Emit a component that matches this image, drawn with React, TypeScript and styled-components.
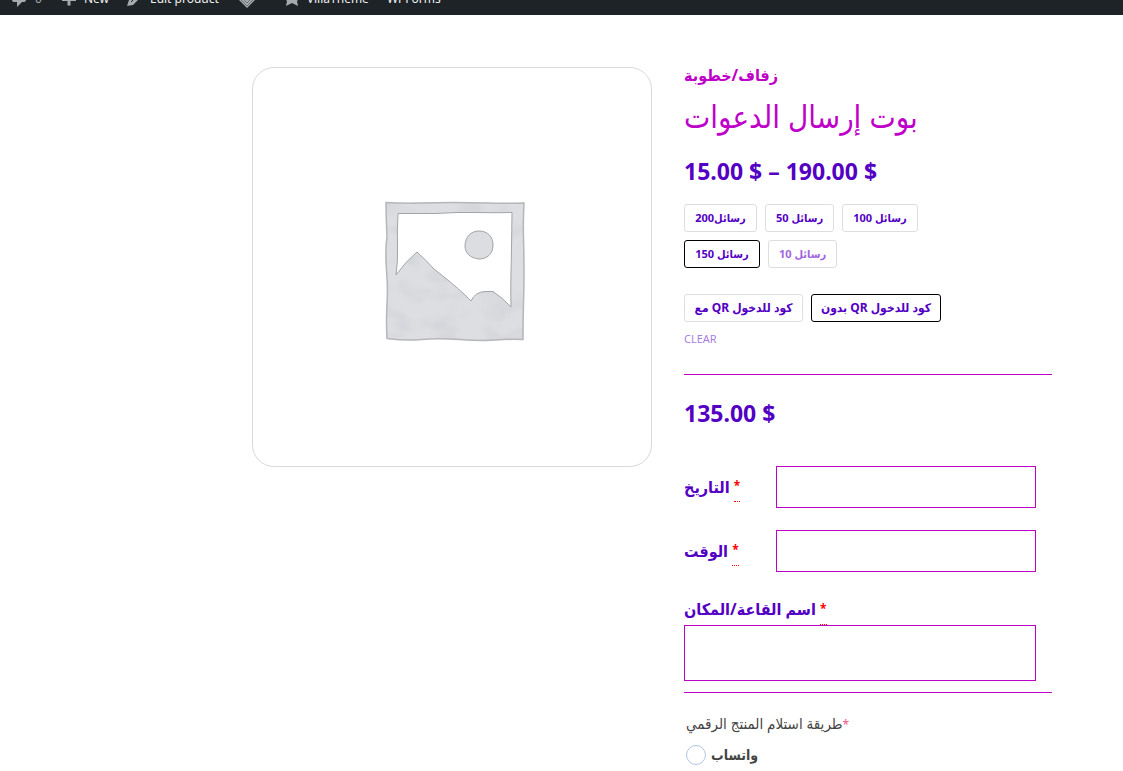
import React, { useState } from "react";
import styled, { createGlobalStyle } from "styled-components";

const purple = "#5300c4";
const magenta = "#bf00c9";

const GlobalStyle = createGlobalStyle`
  *, *::before, *::after { box-sizing: border-box; }
  body {
    margin: 0;
    background: #fff;
    color: ${purple};
    font-family: "Noto Sans", "DejaVu Sans Condensed", "DejaVu Sans", sans-serif;
    overflow: hidden;
  }
`;

const AdminBar = styled.header`
  display: flex;
  align-items: flex-end;
  height: 15px;
  overflow: hidden;
  background: #1d2327;
`;

const AdminMenu = styled.nav`
  display: flex;
  flex-shrink: 0;
  align-items: center;
  height: 32px;
  padding-left: 11px;
  font: 12px/32px "Noto Sans", "Open Sans", sans-serif;
`;

const AdminLink = styled.a<{ $space: number }>`
  display: flex;
  align-items: center;
  gap: 6px;
  margin-right: ${(p) => p.$space}px;
  color: #f0f0f1;
  text-decoration: none;
`;

const Muted = styled.span`
  color: #a7aaad;
`;

const Icon = styled.svg`
  display: block;
  flex-shrink: 0;
  fill: #a7aaad;
`;

const Product = styled.main`
  display: grid;
  grid-template-columns: 400fr 368fr;
  gap: 32px;
  align-items: start;
  padding: 52px 71px 0 252px;
`;

const Gallery = styled.figure`
  display: flex;
  align-items: center;
  justify-content: center;
  aspect-ratio: 1;
  margin: 0;
  padding: 8px 0 0 6px;
  border: 1px solid #d9d9dd;
  border-radius: 22px;
`;

const Summary = styled.section`
  display: flex;
  flex-direction: column;
`;

const Category = styled.a`
  color: ${magenta};
  font-size: 16px;
  font-weight: 700;
  line-height: 16px;
  text-decoration: none;
`;

const Title = styled.h1`
  margin: 8px 0 14px;
  color: ${magenta};
  font-size: 31px;
  font-weight: 300;
  line-height: 50px;
  white-space: nowrap;
`;

const Price = styled.p`
  margin: 0;
  font-size: 23px;
  font-weight: 700;
  line-height: 32px;
`;

const Swatches = styled.div<{ $top: number; $size: number }>`
  display: flex;
  flex-wrap: wrap;
  gap: 8px;
  max-width: 272px;
  margin-top: ${(p) => p.$top}px;
  font-size: ${(p) => p.$size}px;
`;

const Swatch = styled.button<{ $width: number; $faded?: boolean }>`
  width: ${(p) => p.$width}px;
  height: 28px;
  padding: 0;
  border: 1px solid #dedede;
  border-radius: 3px;
  background: #fff;
  color: ${(p) => (p.$faded ? "#a066dc" : purple)};
  font: inherit;
  font-weight: 700;
  line-height: 24px;
  white-space: nowrap;

  &[aria-pressed="true"] {
    border-color: #000;
  }
`;

const Clear = styled.a`
  align-self: flex-start;
  margin: 8px 0 26px;
  color: #a87fe1;
  font-size: 11px;
  line-height: 18px;
  text-decoration: none;
`;

const Rule = styled.hr`
  width: 100%;
  margin: 0;
  border: 0;
  border-top: 1px solid ${magenta};
`;

const VariationPrice = styled(Price)`
  margin: 22px 0 37px;
`;

const Field = styled.div`
  display: grid;
  grid-template-columns: 92px 1fr;
  align-items: center;
  margin: 0 16px 22px 0;
`;

const WideField = styled.div`
  display: flex;
  flex-direction: column;
  margin: 0 16px 11px 0;
`;

const Label = styled.label`
  font-size: 16px;
  font-weight: 700;
  line-height: 31px;
  white-space: nowrap;
`;

const Required = styled.abbr`
  display: inline-block;
  height: 28px;
  border-bottom: 1px dotted red;
  color: red;
  font-size: 12px;
  line-height: 24px;
  text-decoration: none;
  vertical-align: middle;
`;

const TextInput = styled.input`
  width: 100%;
  height: 42px;
  border: 1px solid ${magenta};
  border-radius: 0;
  background: #fff;
`;

const TextArea = styled.textarea`
  display: block;
  width: 100%;
  height: 56px;
  border: 1px solid ${magenta};
  border-radius: 0;
  background: #fff;
  resize: none;
`;

const Delivery = styled.fieldset`
  margin: 0;
  padding: 18px 2px 0;
  border: 0;
  color: #444;
`;

const Legend = styled.legend`
  float: left;
  width: 100%;
  padding: 0;
  font-size: 15px;
  line-height: 24px;
`;

const Star = styled.span`
  color: #f0568c;
  font-size: 12px;
`;

const Choice = styled.label`
  display: flex;
  clear: both;
  align-items: center;
  gap: 5px;
  padding-top: 8px;
  font-size: 14px;
  font-weight: 700;
  line-height: 20px;
`;

const Radio = styled.input`
  appearance: none;
  width: 20px;
  height: 20px;
  margin: 0;
  border: 1px solid #b4c4e0;
  border-radius: 50%;
  background: #fff;

  &:checked {
    box-shadow: inset 0 0 0 4px #fff;
    background: ${purple};
  }
`;

const counts = [
  { text: "200رسائل", width: 73 },
  { text: "رسائل 50", width: 69 },
  { text: "رسائل 100", width: 76 },
  { text: "رسائل 150", width: 76 },
  { text: "رسائل 10", width: 69, faded: true },
];

const codes = [
  { text: "مع QR كود للدخول", width: 119 },
  { text: "بدون QR كود للدخول", width: 130 },
];

const frame =
  "M2 2.500Q20 3.500 36 3T70 2.500T103 3T140 3Q139 20 139.500 38T140 72T139.500 104T139 139.500Q125 139 112 140T76 139.500T38 139.500T3 138.500Q2 120 3 104T2.500 70T3 36Q2 18 2 2.500Z";
const opening =
  "M14 13.500Q13 30 13.500 46T12 75Q21 62 33 52Q42 60 50 69Q68 83 80 94Q85 99 87 101Q91 92 101 91.500H109Q119 98 127 107Q126.500 90 127 72T128 12.500Q110 13 92 12.500T52 13.500Z";

function Placeholder() {
  return (
    <svg width="142" height="142" viewBox="0 0 142 142" role="img" aria-label="Product placeholder">
      <defs>
        <filter id="wash" x="0" y="0" width="1" height="1" colorInterpolationFilters="sRGB">
          <feTurbulence type="fractalNoise" baseFrequency="0.04 0.06" numOctaves="2" seed="4" />
          <feColorMatrix values="0 0 0 0 0.8  0 0 0 0 0.81  0 0 0 0 0.83  1.4 0 0 0 -0.6" />
          <feComposite in2="SourceGraphic" operator="in" result="n" />
          <feMerge>
            <feMergeNode in="SourceGraphic" />
            <feMergeNode in="n" />
          </feMerge>
        </filter>
      </defs>
      <path d={frame + opening} fill="#dddee2" fillRule="evenodd" filter="url(#wash)" />
      <path d={frame} fill="none" stroke="#b5b6ba" strokeWidth="1.500" />
      <path d={opening} fill="none" stroke="#a3a4a8" />
      <path
        d="M95 31C104 31 109 37 109 45C109 54 103 59 95 59C86 58 81 53 81 46C81 37 87 31 95 31Z"
        fill="#dcdde1"
        stroke="#a3a4a8"
      />
    </svg>
  );
}

export default function App() {
  const [count, setCount] = useState(3);
  const [code, setCode] = useState(1);

  return (
    <>
      <GlobalStyle />
      <AdminBar>
        <AdminMenu aria-label="Admin">
          <AdminLink href="#comments" $space={18}>
            <Icon width="18" height="18" viewBox="0 0 18 18">
              <path d="M3 1h10a2 2 0 0 1 2 2v7a2 2 0 0 1-2 2h-2l-5 5v-5H3a2 2 0 0 1-2-2V3a2 2 0 0 1 2-2Z" />
            </Icon>
            <Muted>0</Muted>
          </AdminLink>
          <AdminLink href="#new" $space={17}>
            <Icon width="18" height="18" viewBox="0 0 18 18">
              <path d="M7.500 2h3v6H16v3h-5.500v4.500h-3V11H2V8h5.500Z" />
            </Icon>
            New
          </AdminLink>
          <AdminLink href="#edit" $space={19}>
            <Icon width="18" height="18" viewBox="0 0 18 18">
              <path d="m12 2 4 4-9 9-6 1 2-6Z" />
              <path d="m5 12 7-7" fill="none" stroke="#1d2327" />
            </Icon>
            Edit product
          </AdminLink>
          <AdminLink href="#layers" aria-label="Layers" $space={27}>
            <Icon width="18" height="18" viewBox="0 0 18 18">
              <path d="m9 0 9 9-9 9-9-9Z" />
              <path d="m2 9 7 7 7-7M5 9l4 4 4-4" fill="none" stroke="#6b7076" />
            </Icon>
          </AdminLink>
          <AdminLink href="#villatheme" $space={18}>
            <Icon width="18" height="18" viewBox="0 0 18 18">
              <path d="m9 0 3 6 6 1-4 4 1 5-6-3-6 3 1-5-4-4 6-1Z" />
            </Icon>
            VillaTheme
          </AdminLink>
          <AdminLink href="#wpforms" $space={0}>
            WPForms
          </AdminLink>
        </AdminMenu>
      </AdminBar>

      <Product>
        <Gallery>
          <Placeholder />
        </Gallery>

        <Summary>
          <Category href="#category">زفاف/خطوبة</Category>
          <Title>بوت إرسال الدعوات</Title>
          <Price>15.00 $ – 190.00 $</Price>

          <Swatches $top={17} $size={11}>
            {counts.map((item, i) => (
              <Swatch
                key={item.text}
                type="button"
                $width={item.width}
                $faded={item.faded}
                aria-pressed={count === i}
                onClick={() => setCount(i)}
              >
                {item.text}
              </Swatch>
            ))}
          </Swatches>
          <Swatches $top={26} $size={12}>
            {codes.map((item, i) => (
              <Swatch
                key={item.text}
                type="button"
                $width={item.width}
                aria-pressed={code === i}
                onClick={() => setCode(i)}
              >
                {item.text}
              </Swatch>
            ))}
          </Swatches>
          <Clear href="#clear">CLEAR</Clear>
          <Rule />

          <VariationPrice>135.00 $</VariationPrice>

          <Field>
            <Label htmlFor="date">
              التاريخ <Required title="required">*</Required>
            </Label>
            <TextInput id="date" type="text" />
          </Field>
          <Field>
            <Label htmlFor="time">
              الوقت <Required title="required">*</Required>
            </Label>
            <TextInput id="time" type="text" />
          </Field>
          <WideField>
            <Label htmlFor="place">
              اسم القاعة/المكان <Required title="required">*</Required>
            </Label>
            <TextArea id="place" />
          </WideField>
          <Rule />

          <Delivery>
            <Legend>
              طريقة استلام المنتج الرقمي<Star>*</Star>
            </Legend>
            <Choice>
              <Radio type="radio" name="delivery" value="whatsapp" />
              واتساب
            </Choice>
          </Delivery>
        </Summary>
      </Product>
    </>
  );
}
